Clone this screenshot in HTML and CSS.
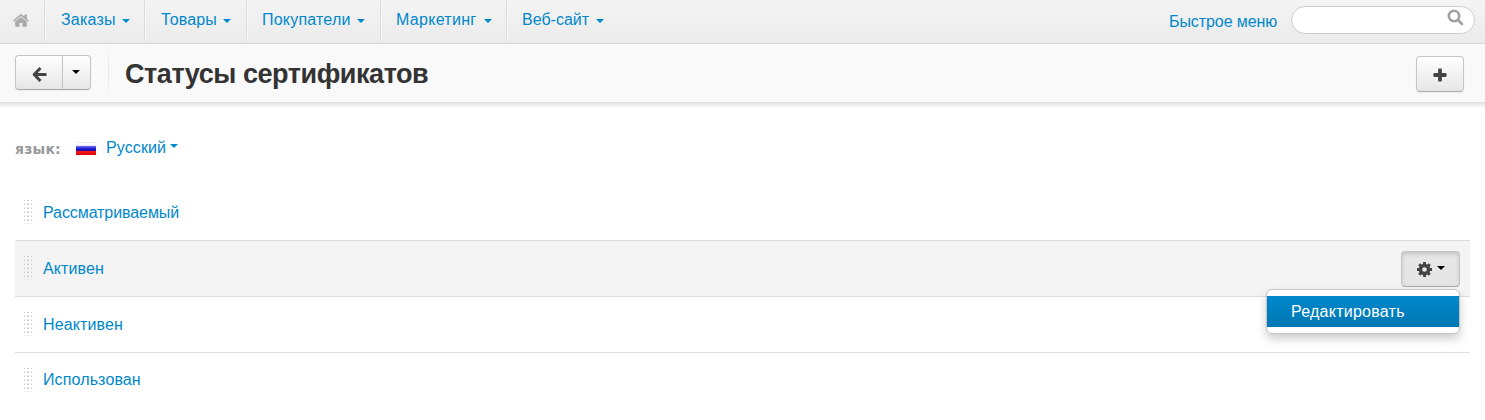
FILE: index.html
```html
<!DOCTYPE html>
<html lang="ru">
<head>
<meta charset="utf-8">
<title>Статусы сертификатов</title>
<link rel="stylesheet" href="styles.css">
</head>
<body>
<header class="navbar">
  <nav class="nav">
    <a class="home"><svg width="16" height="13" viewBox="0 0 16 13" fill="#aaa"><path d="M8 2.900 2.200 7.600V12c0 .4.300.7.700.7H6.600V9h2.800v3.700h3.700c.4 0 .7-.3.700-.7V7.600z"/><path d="M15.700 6.300 13.900 4.800V.9c0-.2-.1-.3-.3-.3h-2c-.2 0-.3.100-.3.300v1.600L8.900.5c-.5-.4-1.300-.4-1.800 0L.3 6.300c-.2.100-.2.300 0 .5l.5.600c.1.100.3.200.5 0L8 1.900l6.700 5.500c.2.200.4.100.5 0l.5-.6c.2-.2.200-.4 0-.5z"/></svg></a>
    <a class="item orders"><span>Заказы</span><b class="caret"></b></a>
    <a class="item goods"><span>Товары</span><b class="caret"></b></a>
    <a class="item customers"><span>Покупатели</span><b class="caret"></b></a>
    <a class="item marketing"><span>Маркетинг</span><b class="caret"></b></a>
    <a class="item site"><span>Веб-сайт</span><b class="caret"></b></a>
  </nav>
  <a class="quick">Быстрое меню</a>
  <div class="search"><svg width="17" height="17" viewBox="0 0 17 17" fill="none" stroke="#a0a0a0" stroke-width="2.600"><circle cx="7" cy="7" r="5.200"/><path d="m11 11 4 4" stroke-linecap="round"/></svg></div>
</header>
<section class="actions">
  <div class="group">
    <a class="btn back"><svg width="15" height="15" viewBox="0 0 15 15" fill="none" stroke="#444" stroke-width="3"><path d="M8.500 1 2.200 7.500l6.300 6.500M2.500 7.500H14.500" stroke-linejoin="round"/></svg></a>
    <a class="btn toggle"><b class="caret"></b></a>
  </div>
  <h1>Статусы сертификатов</h1>
  <a class="btn add"><svg width="14" height="14" viewBox="0 0 14 14" fill="#444"><path d="M6 .5h2c.5 0 .9.400.9.900v3.700h3.800c.5 0 .9.400.9.900v2c0 .5-.4.900-.9.900H8.900v3.700c0 .5-.4.900-.9.900H6c-.5 0-.9-.4-.9-.9V8.900H1.300c-.5 0-.9-.4-.9-.9V6c0-.5.4-.9.900-.9h3.800V1.400c0-.5.400-.9.900-.9z"/></svg></a>
</section>
<main>
  <div class="language">
    <span class="label">язык:</span><i class="flag"></i><a class="lang">Русский</a><b class="caret"></b>
  </div>
  <div class="row"><i class="handle"></i><a class="s1">Рассматриваемый</a></div>
  <div class="row active"><i class="handle"></i><a class="s2">Активен</a>
    <div class="tools">
      <a class="btn gear"><svg width="15" height="15" viewBox="0 0 14 14"><g fill="none" stroke="#444"><circle cx="7" cy="7" r="3.800" stroke-width="3.200"/><path d="M7 0v2.500M7 11.500V14M0 7h2.500M11.500 7H14M2.050 2.050l1.800 1.800M10.150 10.150l1.800 1.800M2.050 11.950l1.800-1.800M10.150 3.850l1.800-1.800" stroke-width="2.700"/></g></svg><b class="caret"></b></a>
      <div class="menu"><a>Редактировать</a></div>
    </div>
  </div>
  <div class="row"><i class="handle"></i><a class="s3">Неактивен</a></div>
  <div class="row last"><i class="handle"></i><a class="s4">Использован</a></div>
</main>
</body>
</html>
```
FILE: styles.css
```css
* { box-sizing: border-box; }
body { margin: 0; height: 420px; overflow: hidden; background: #fff; color: #333; font: 16px/20px "Liberation Sans", Arial, sans-serif; }
a { color: #0088cc; text-decoration: none; white-space: nowrap; }
svg { display: block; flex: none; }
.caret { flex: none; width: 0; height: 0; border: 4px solid transparent; border-top-color: currentColor; border-bottom: 0; }
.navbar { display: flex; height: 44px; background: linear-gradient(#f4f4f4, #ebebeb); border-bottom: 1px solid #d5d5d5; }
.nav { display: flex; flex: 1; height: 42px; }
.home { width: 45px; padding: 14px 0 0 13px; border-right: 1px solid #dcdcdc; }
.item { display: flex; justify-content: space-between; padding: 10px 13px 0 16px; border-right: 1px solid #dcdcdc; box-shadow: inset 1px 0 #f8f8f8; }
.item .caret { margin-top: 9px; }
.orders { width: 100px; padding-right: 14px; letter-spacing: .2px; }
.goods { width: 102px; padding-right: 15px; letter-spacing: .15px; }
.customers { width: 134px; padding-left: 15px; padding-right: 15px; letter-spacing: .2px; }
.marketing { width: 126px; padding-left: 15px; padding-right: 14px; letter-spacing: .3px; }
.site { width: 112px; padding-left: 15px; padding-right: 15px; border: 0; }
.quick { width: 122px; padding-top: 12px; letter-spacing: -.08px; }
.search { width: 184px; height: 28px; margin: 6px 10px 0 0; padding: 2px 0 0 155px; border: 1px solid #ccc; border-radius: 14px; background: #fff; }
.actions { position: relative; display: flex; height: 58px; padding: 0 21px 0 15px; background: #f9f9f9; }
.actions::after { content: ""; position: absolute; left: 0; right: 0; top: 100%; height: 6px; background: linear-gradient(#dedede, #fff); }
.btn { display: flex; align-items: center; justify-content: center; border: 1px solid #c5c5c5; border-bottom-color: #aaa; border-radius: 4px; background: linear-gradient(#fff, #e6e6e6); box-shadow: inset 0 1px rgba(255,255,255,.2), 0 1px 2px rgba(0,0,0,.05); color: #000; }
.group { display: flex; width: 94px; height: 56px; padding-top: 11px; border-right: 1px solid; border-image: linear-gradient(#f9f9f9, #e6e6e6 50%, #f9f9f9) 1; }
.group .btn { height: 35px; }
.back { width: 48px; padding-top: 4px; border-radius: 4px 0 0 4px; }
.toggle { width: 29px; margin-left: -1px; border-radius: 0 4px 4px 0; padding: 0 1px 1px 0; }
h1 { flex: 1; margin: 0; padding: 14px 0 0 16px; font-size: 27px; line-height: 32px; letter-spacing: -.45px; white-space: nowrap; }
.add { width: 48px; height: 36px; margin-top: 12px; padding-top: 1px; }
main { padding: 0 15px; }
.language { display: flex; height: 83px; padding-top: 36px; color: #0088cc; }
.label { width: 61px; padding-top: 1px; color: #999; font: bold 14px/20px "DejaVu Sans", sans-serif; letter-spacing: .2px; }
.flag { width: 20px; height: 13px; margin-top: 4px; background: linear-gradient(#dcdce4 0, #fff 10%, #f4f4ff 26%, #5050e0 36%, #0000c8 64%, #f02020 70%, #e00000 100%); }
.lang { width: 74px; padding-left: 10px; letter-spacing: .1px; }
.language .caret { margin-top: 6px; }
.row { display: flex; height: 56px; padding-left: 9px; border-bottom: 1px solid #ddd; }
.row > a { padding-top: 18px; }
.active { background: #f4f4f4; }
.last { border: 0; }
.last > a { padding-top: 17px; }
.handle { width: 8px; height: 24px; margin: 15px 11px 0 0; background: linear-gradient(#ccc 1px, transparent 1px) 0 0/8px 4px, linear-gradient(#e2e2e2 1px, transparent 1px) 0 3px/8px 4px; mask: linear-gradient(90deg, #000 1px, transparent 1px 3px, #000 3px 5px, transparent 5px 7px, #000 7px); }
.s1 { letter-spacing: -.08px; }
.s2, .s3, .s4 { letter-spacing: .12px; }
.tools { position: relative; margin: 10px 10px 0 auto; }
.gear { width: 59px; height: 36px; gap: 5px; padding-top: 1px; background: #e6e6e6; box-shadow: inset 0 2px 4px rgba(0,0,0,.15); }
.gear .caret { margin-top: -4px; }
.menu { position: absolute; z-index: 2; top: 38px; right: 0; width: 194px; height: 45px; padding: 6px 0; background: #fff; border: 1px solid #c5c5c5; border-radius: 6px; box-shadow: 0 5px 10px rgba(0,0,0,.2); }
.menu a { display: block; height: 31px; padding: 6px 24px; color: #fff; letter-spacing: .25px; background: linear-gradient(#0088cc, #0077b3); }
```
